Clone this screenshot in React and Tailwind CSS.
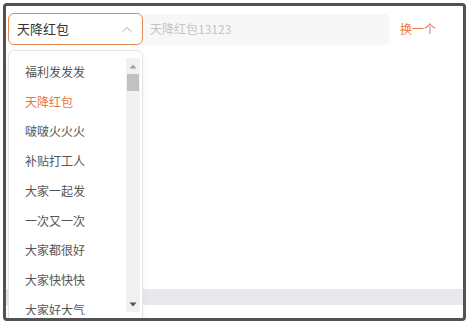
export default function App() {
  const items = [
    "福利发发发",
    "天降红包",
    "啵啵火火火",
    "补贴打工人",
    "大家一起发",
    "一次又一次",
    "大家都很好",
    "大家快快快",
    "大家好大气",
  ];
  const selected = "天降红包";

  return (
    <div
      className="w-[470px] h-[327px] bg-white pt-[3px] pl-[3px]"
      style={{ fontFamily: '"Noto Sans CJK SC", "Noto Sans", sans-serif' }}
    >
      <div className="relative w-[463px] h-[318px] border-[3px] border-[#525252] rounded-[4px] overflow-hidden bg-white">
        {/* top row */}
        <div className="flex items-center pl-[2px] pt-[7px]">
          <div className="flex items-center justify-between w-[135px] h-[32px] border border-[#e58a4f] rounded-[6px] pl-[8px] pr-[10px]">
            <span className="text-[13px] text-[#333333]">天降红包</span>
            <svg width="10" height="6" viewBox="0 0 10 6" fill="none">
              <path d="M1 5.5L5 1.5L9 5.5" stroke="#a0a0a0" strokeWidth="1" />
            </svg>
          </div>
          <div className="flex items-center w-[247px] h-[31px] bg-[#f7f7f8] rounded-r-[6px] pl-[7px]">
            <span className="text-[12px] text-[#c4c4c4]">天降红包13123</span>
          </div>
          <span className="ml-[10px] text-[12px] text-[#e9773a]">换一个</span>
        </div>

        {/* bottom band */}
        <div className="mt-[244px] h-[16px] bg-[#e8e9ec]" />

        {/* dropdown */}
        <div className="absolute left-[2px] top-[44px] w-[135px] h-[290px] bg-white border border-[#e4e4e7] rounded-t-[6px] shadow-[0_2px_6px_rgba(0,0,0,0.06)] pt-[6px]">
          <div className="h-[258px] overflow-hidden">
            {items.map((item) => (
              <div
                key={item}
                className={
                  item === selected
                    ? "h-[29.75px] flex items-center pl-[16px] text-[12px] text-[#e9773a]"
                    : "h-[29.75px] flex items-center pl-[16px] text-[12px] text-[#555555]"
                }
              >
                {item}
              </div>
            ))}
          </div>
          <div className="absolute right-[2px] top-[7px] w-[14px] h-[254px] bg-[#f1f1f1] flex flex-col items-center">
            <svg width="8" height="5" viewBox="0 0 8 5" className="mt-[6px]">
              <path d="M4 0.5L7.5 4.5H0.5Z" fill="#a3a3a3" />
            </svg>
            <div className="mt-[5px] w-[12px] h-[17px] bg-[#c1c1c1]" />
            <div className="flex-1" />
            <svg width="8" height="5" viewBox="0 0 8 5" className="mb-[5px]">
              <path d="M0.5 0.5H7.5L4 4.5Z" fill="#505050" />
            </svg>
          </div>
        </div>
      </div>
    </div>
  );
}
